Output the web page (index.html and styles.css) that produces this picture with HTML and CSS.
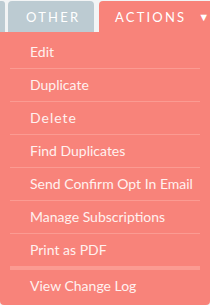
FILE: index.html
```html
<!DOCTYPE html>
<html>
<head>
<meta charset="utf-8">
<link rel="stylesheet" href="styles.css">
</head>
<body>
<div class="tabs">
  <div class="tab tab-stub"></div>
  <div class="tab tab-other">OTHER</div>
  <div class="tab tab-actions">ACTIONS<span class="caret">&#9660;</span></div>
</div>
<ul class="menu">
  <li class="item">Edit</li>
  <li class="sep"></li>
  <li class="item">Duplicate</li>
  <li class="sep"></li>
  <li class="item spaced">Delete</li>
  <li class="sep"></li>
  <li class="item">Find Duplicates</li>
  <li class="sep"></li>
  <li class="item">Send Confirm Opt In Email</li>
  <li class="sep"></li>
  <li class="item">Manage Subscriptions</li>
  <li class="sep"></li>
  <li class="item">Print as PDF</li>
  <li class="sep thick"></li>
  <li class="item">View Change Log</li>
</ul>
</body>
</html>
```
FILE: styles.css
```css
html, body {
  margin: 0;
  padding: 0;
  background: #f2f4f5;
  font-family: Lato, "Liberation Sans", sans-serif;
}
.tabs {
  display: flex;
  height: 32px;
  padding-top: 1px;
  box-sizing: border-box;
}
.tab {
  border-radius: 4px 4px 0 0;
  color: #ffffff;
  font-size: 13px;
  letter-spacing: 2.2px;
  display: flex;
  align-items: center;
  box-sizing: border-box;
}
.tab-stub {
  width: 5px;
  background: #bccbd2;
  border-radius: 0 3px 0 0;
}
.tab-other {
  width: 86px;
  margin-left: 3px;
  background: #bccbd2;
  padding-left: 18px;
}
.tab-actions {
  flex: 1;
  margin-left: 5px;
  background: #f8837a;
  padding-left: 16px;
  border-radius: 4px 0 0 0;
}
.caret {
  font-size: 11px;
  margin-left: 12px;
  letter-spacing: 0;
}
.menu {
  list-style: none;
  margin: 0;
  padding: 4px 0 3px;
  background: #f8837a;
  border-radius: 0 0 4px 4px;
  width: 210px;
  height: 273px;
  box-sizing: border-box;
}
.item {
  height: 32px;
  line-height: 32px;
  padding-left: 30px;
  color: #fff1ef;
  font-size: 14px;
}
.spaced {
  letter-spacing: 1px;
}
.sep {
  height: 1px;
  margin: 0 10px;
  background: #fb9b92;
}
.sep.thick {
  height: 4px;
}
```
